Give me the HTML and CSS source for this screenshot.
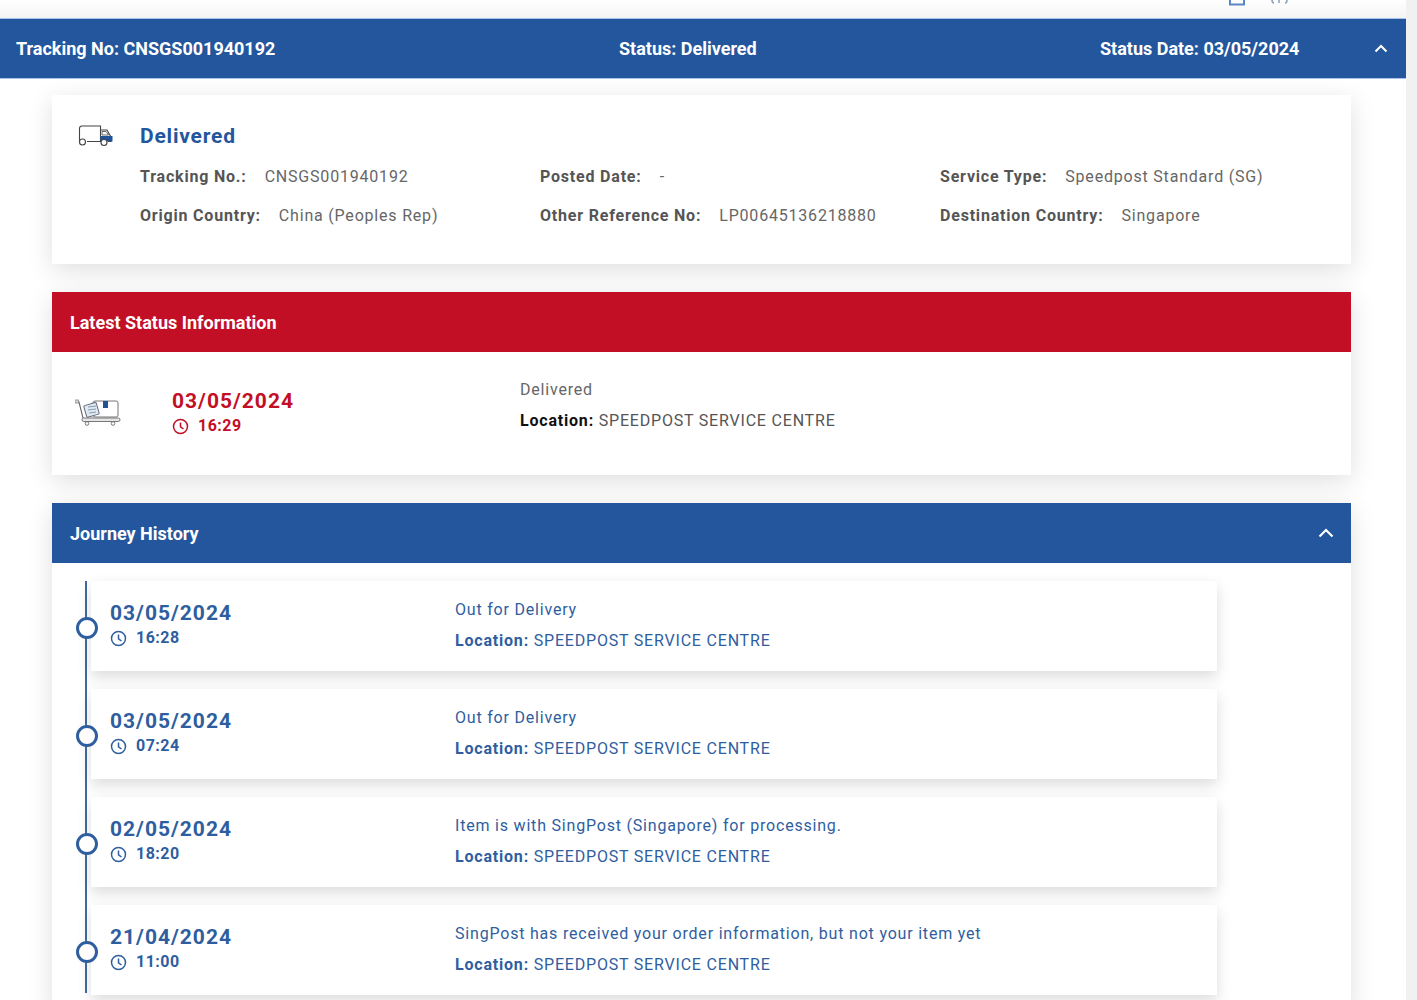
FILE: index.html
```html
<!DOCTYPE html>
<html lang="en">
<head>
<meta charset="utf-8">
<title>Track and Trace</title>
<link rel="stylesheet" href="styles.css">
</head>
<body>
<div class="page">
  <div class="top-strip">
    <svg class="top-icon-a" width="18" height="6" viewBox="0 0 18 6"><path d="M2 0V4.500H16V0" fill="none" stroke="#5b86c4" stroke-width="2"/></svg>
    <svg class="top-icon-b" width="20" height="5" viewBox="0 0 20 5"><path d="M2 0C2 2 3 3 4 3M17 0C17 2 16 3 15 3M9 0V3" fill="none" stroke="#8a9fc0" stroke-width="1.500"/></svg>
  </div>
  <header class="track-bar">
    <span class="tb-no">Tracking No: CNSGS001940192</span>
    <span class="tb-status">Status: Delivered</span>
    <span class="tb-date">Status Date: 03/05/2024</span>
    <svg class="chev" width="14" height="9" viewBox="0 0 14 9"><path d="M1.500 7.500L7 2L12.500 7.500" fill="none" stroke="#fff" stroke-width="2"/></svg>
  </header>

  <main class="content">
    <section class="card summary">
      <svg class="truck" width="36" height="24" viewBox="0 0 36 24">
        <path d="M3 18.500H1.500V5.500Q1.500 3 4 3H22.500V18.500H9M16 18.500H9" fill="none" stroke="#444" stroke-width="1.100"/>
        <path d="M22.500 7H29L33 14V18.500H30" fill="none" stroke="#444" stroke-width="1.100"/>
        <path d="M22.500 13H34.500V18.500H22.500Z" fill="#1f5299"/>
        <path d="M24 8.500H28L30.500 12H24Z" fill="#fff" stroke="#444" stroke-width=".8"/>
        <circle cx="4.500" cy="19" r="3" fill="#fff" stroke="#444" stroke-width="1.100"/>
        <circle cx="26" cy="19.500" r="3" fill="#fff" stroke="#444" stroke-width="1.100"/>
      </svg>
      <div class="summary-body">
        <h2 class="delivered">Delivered</h2>
        <div class="facts">
          <p><b>Tracking No.:</b><span>CNSGS001940192</span></p>
          <p><b>Posted Date:</b><span>-</span></p>
          <p><b>Service Type:</b><span>Speedpost Standard (SG)</span></p>
          <p><b>Origin Country:</b><span>China (Peoples Rep)</span></p>
          <p><b>Other Reference No:</b><span>LP00645136218880</span></p>
          <p><b>Destination Country:</b><span>Singapore</span></p>
        </div>
      </div>
    </section>

    <section class="card latest">
      <h3 class="band red">Latest Status Information</h3>
      <div class="latest-row">
        <svg class="cart" width="46" height="28" viewBox="0 0 46 28">
          <path d="M1 4H4L8 20" fill="none" stroke="#666" stroke-width="1.100"/>
          <rect x="0" y="2" width="3.500" height="3" fill="#ddd" stroke="#777" stroke-width=".7"/>
          <rect x="18" y="3" width="25" height="16" rx="2" fill="#fff" stroke="#777" stroke-width="1"/>
          <rect x="28" y="3" width="5" height="7" fill="#1f5299"/>
          <rect x="10" y="6" width="13" height="12" rx="1" fill="#dfe9f3" stroke="#667" stroke-width="1" transform="rotate(-16 16 12)"/>
          <path d="M13 9L21 8M13 12L21 11M14 15L21 14" stroke="#89a" stroke-width="1"/>
          <rect x="7" y="20" width="38" height="3.500" rx="1.700" fill="#e6e6e6" stroke="#777" stroke-width="1"/>
          <circle cx="12" cy="25.500" r="1.800" fill="#fff" stroke="#777"/>
          <circle cx="38" cy="25.500" r="1.800" fill="#fff" stroke="#777"/>
        </svg>
        <div class="when red-text">
          <div class="date">03/05/2024</div>
          <div class="time">
            <svg class="clock" width="17" height="17" viewBox="0 0 17 17"><circle cx="8.500" cy="8.500" r="7" fill="none" stroke="currentColor" stroke-width="1.500"/><path d="M8.500 4.500V8.800L11.500 11" fill="none" stroke="currentColor" stroke-width="1.500"/></svg>
            <span>16:29</span>
          </div>
        </div>
        <div class="what dark-text">
          <p class="event">Delivered</p>
          <p class="place"><b>Location:</b> SPEEDPOST SERVICE CENTRE</p>
        </div>
      </div>
    </section>

    <section class="card journey">
      <h3 class="band blue">Journey History
        <svg class="chev-j" width="16" height="10" viewBox="0 0 16 10"><path d="M1.500 8.500L8 2L14.500 8.500" fill="none" stroke="#fff" stroke-width="2.200"/></svg>
      </h3>
      <ol class="timeline">
        <li class="entry">
          <div class="when"><div class="date">03/05/2024</div><div class="time"><svg class="clock" width="17" height="17" viewBox="0 0 17 17"><circle cx="8.500" cy="8.500" r="7" fill="none" stroke="currentColor" stroke-width="1.500"/><path d="M8.500 4.500V8.800L11.500 11" fill="none" stroke="currentColor" stroke-width="1.500"/></svg><span>16:28</span></div></div>
          <div class="what"><p class="event">Out for Delivery</p><p class="place"><b>Location:</b> SPEEDPOST SERVICE CENTRE</p></div>
        </li>
        <li class="entry">
          <div class="when"><div class="date">03/05/2024</div><div class="time"><svg class="clock" width="17" height="17" viewBox="0 0 17 17"><circle cx="8.500" cy="8.500" r="7" fill="none" stroke="currentColor" stroke-width="1.500"/><path d="M8.500 4.500V8.800L11.500 11" fill="none" stroke="currentColor" stroke-width="1.500"/></svg><span>07:24</span></div></div>
          <div class="what"><p class="event">Out for Delivery</p><p class="place"><b>Location:</b> SPEEDPOST SERVICE CENTRE</p></div>
        </li>
        <li class="entry">
          <div class="when"><div class="date">02/05/2024</div><div class="time"><svg class="clock" width="17" height="17" viewBox="0 0 17 17"><circle cx="8.500" cy="8.500" r="7" fill="none" stroke="currentColor" stroke-width="1.500"/><path d="M8.500 4.500V8.800L11.500 11" fill="none" stroke="currentColor" stroke-width="1.500"/></svg><span>18:20</span></div></div>
          <div class="what"><p class="event">Item is with SingPost (Singapore) for processing.</p><p class="place"><b>Location:</b> SPEEDPOST SERVICE CENTRE</p></div>
        </li>
        <li class="entry">
          <div class="when"><div class="date">21/04/2024</div><div class="time"><svg class="clock" width="17" height="17" viewBox="0 0 17 17"><circle cx="8.500" cy="8.500" r="7" fill="none" stroke="currentColor" stroke-width="1.500"/><path d="M8.500 4.500V8.800L11.500 11" fill="none" stroke="currentColor" stroke-width="1.500"/></svg><span>11:00</span></div></div>
          <div class="what"><p class="event">SingPost has received your order information, but not your item yet</p><p class="place"><b>Location:</b> SPEEDPOST SERVICE CENTRE</p></div>
        </li>
      </ol>
    </section>
  </main>
</div>
</body>
</html>
```
FILE: styles.css
```css
* { box-sizing: border-box; }
html, body { margin: 0; height: 1000px; overflow: hidden; background: #f1f1f1; }
body { font-family: Roboto, "Liberation Sans", sans-serif; color: #666; }
p, h2, h3, ol { margin: 0; padding: 0; }
ol { list-style: none; }

.page { width: 1406px; height: 1000px; background: #fff; overflow: hidden; }

.top-strip { height: 18px; position: relative; background: linear-gradient(#fff, #f4f4f4); }
.top-icon-a { position: absolute; left: 1228px; top: 0; }
.top-icon-b { position: absolute; left: 1270px; top: 0; }

.track-bar {
  height: 61px; background: #23569c; color: #fff;
  font-size: 18px; font-weight: 700;
  display: grid; grid-template-columns: 603px 481px 274px 1fr;
  align-items: center; padding-left: 16px;
  border-top: 1px solid #a9c4ea; border-bottom: 1px solid #a9c4ea;
}
.tb-status { padding-left: 0; }
.chev { justify-self: start; }

.content { padding: 16px 55px 0 52px; display: flex; flex-direction: column; gap: 28px; }
.card { background: #fff; box-shadow: 0 6px 24px rgba(0, 0, 0, .13); }

.summary { height: 169px; display: flex; padding: 26px 0 0 26px; }
.truck { flex: none; margin-top: 2px; }
.summary-body { margin-left: 26px; flex: 1; }
.delivered { font-size: 21px; font-weight: 700; color: #23569c; letter-spacing: .8px; line-height: 30px; }
.facts { display: grid; grid-template-columns: 400px 400px 1fr; row-gap: 18px; margin-top: 15px; font-size: 16px; letter-spacing: .8px; line-height: 21px; }
.facts b { font-weight: 700; color: #555; margin-right: 18px; }
.facts span { color: #666; }

.band { height: 60px; display: flex; align-items: center; justify-content: space-between; padding: 0 17px 0 18px; color: #fff; font-size: 18px; font-weight: 700; }
.band.red { background: #c30f26; }
.band.blue { background: #23569c; }

.latest { height: 183px; }
.latest-row { display: flex; height: 123px; position: relative; }
.cart { position: absolute; left: 23px; top: 46px; }
.latest-row .when { margin-left: 120px; width: 348px; padding-top: 36px; }
.latest-row .what { padding-top: 27px; }

.date { font-size: 21px; font-weight: 700; letter-spacing: 1px; line-height: 26px; }
.time { display: flex; align-items: center; gap: 9px; font-size: 16px; font-weight: 700; letter-spacing: .5px; line-height: 22px; margin-top: 1px; }
.clock { flex: none; }
.red-text { color: #c30f26; }

.what { font-size: 16px; letter-spacing: .8px; line-height: 21px; }
.what b { font-weight: 700; }
.event { margin-bottom: 10px; }
.dark-text { color: #666; }
.dark-text b { color: #111; }
.dark-text .place { color: #555; }

.journey { flex: 1; height: 520px; }
.chev-j { flex: none; }
.timeline { position: relative; margin-left: 33px; padding-top: 18px; color: #2f5e9f; width: 1132px; }
.timeline::before { content: ""; position: absolute; left: 0; top: 18px; width: 2px; height: 412px; background: #3f6aa6; }
.entry { position: relative; margin-left: 6px; height: 90px; margin-bottom: 18px; padding-left: 19px; background: #fff; display: flex; box-shadow: 0 6px 14px rgba(0, 0, 0, .14); }
.entry::before { content: ""; position: absolute; left: -15px; top: 36px; width: 16px; height: 16px; border: 3px solid #2f5e9f; border-radius: 50%; background: #fff; }
.entry .when { width: 345px; padding-top: 19px; }
.entry .what { padding-top: 18px; }
.entry .event { margin-bottom: 10px; }
```
